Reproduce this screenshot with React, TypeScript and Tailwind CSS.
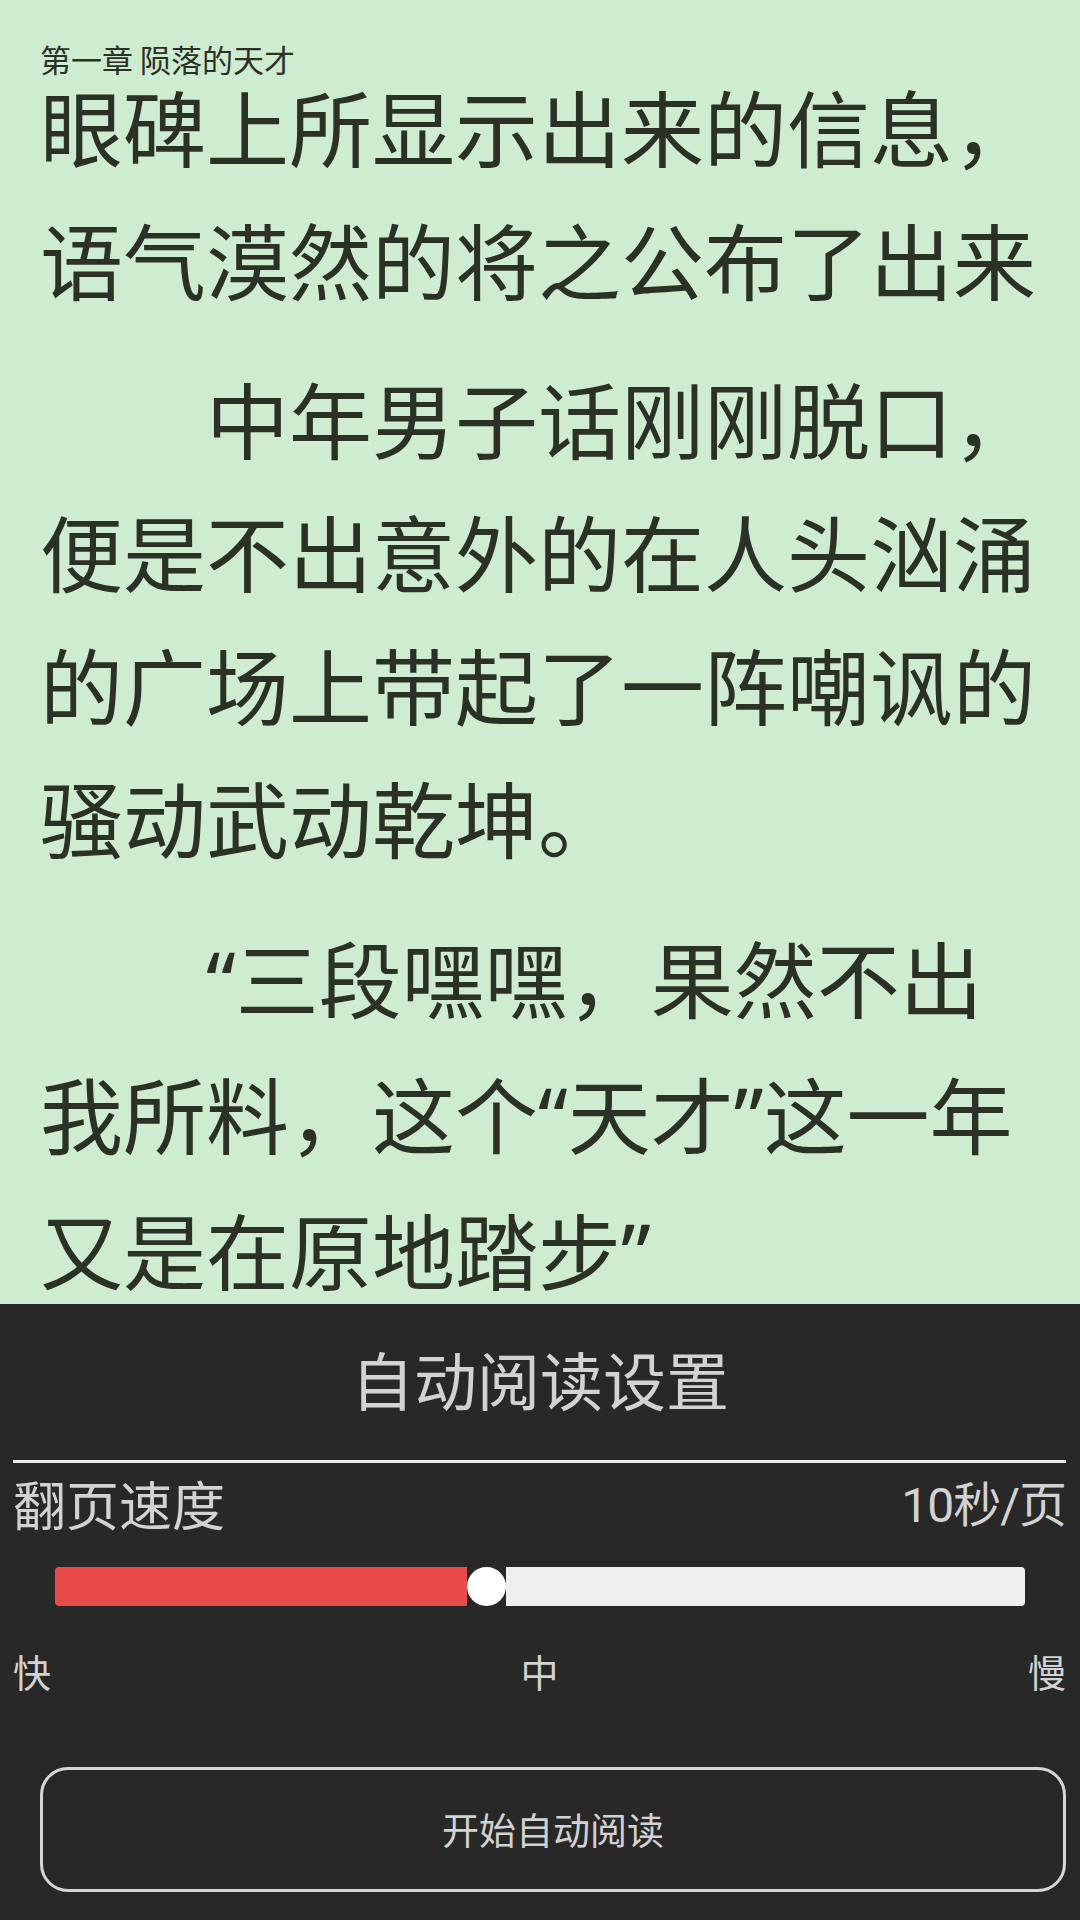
import React from "react";

const cjk = { fontFamily: '"Noto Sans CJK SC", "Noto Sans", sans-serif' };
const q = { fontFamily: '"Noto Sans", "Noto Sans CJK SC", sans-serif' };
const num = { fontFamily: 'Roboto, "Noto Sans CJK SC", sans-serif' };

function Line({ children, indent }: { children: React.ReactNode; indent?: boolean }) {
  return (
    <div className={`whitespace-nowrap leading-[133px] ${indent ? "pl-[166px]" : ""}`}>{children}</div>
  );
}

export default function App() {
  return (
    <div className="w-[1080px] h-[1920px] flex flex-col overflow-hidden" style={cjk}>
      <div className="h-[1304px] shrink-0 bg-[#cdecd0] text-[#2c3126] pl-[40px] pt-[44px]">
        <div className="text-[31px] leading-[30px] whitespace-nowrap">第一章 陨落的天才</div>
        <div className="text-[83px]">
          <div className="mb-[26px]">
            <div className="whitespace-nowrap leading-[103px] mb-[15px]">眼碑上所显示出来的信息，</div>
            <Line>语气漠然的将之公布了出来</Line>
          </div>
          <div className="mb-[27px]">
            <Line indent>中年男子话刚刚脱口，</Line>
            <Line>便是不出意外的在人头汹涌</Line>
            <Line>的广场上带起了一阵嘲讽的</Line>
            <Line>骚动武动乾坤。</Line>
          </div>
          <div>
            <Line indent>
              <span style={q}>“</span>三段嘿嘿，果然不出
            </Line>
            <Line>
              我所料，这个<span style={q}>“</span>天才<span style={q}>”</span>这一年
            </Line>
            <div className="whitespace-nowrap leading-[100px] mt-[16px]">
              又是在原地踏步<span style={q}>”</span>
            </div>
          </div>
        </div>
      </div>

      <div className="flex-1 bg-[#282828] text-[#d2d2d2] flex flex-col pt-[43px]">
        <div className="h-[62px] text-[63px] leading-[62px] text-center">自动阅读设置</div>
        <div className="mt-[51px] ml-[13px] mr-[14px] h-[3px] bg-[#ececec]" />
        <div className="mt-[14px] h-[52px] flex items-center justify-between pl-[13px] pr-[14px] text-[53px] leading-[52px]">
          <span>翻页速度</span>
          <span className="text-[48px] leading-[52px] tracking-[-1px]" style={num}>
            10<span style={cjk}>秒</span>/<span style={cjk}>页</span>
          </span>
        </div>
        <div className="mt-[38px] mx-[55px] h-[39px] flex items-stretch">
          <div className="w-[412px] bg-[#e94b4a] rounded-l-[4px]" />
          <div className="w-[39px] h-[39px] rounded-full bg-white" />
          <div className="flex-1 bg-[#efefef] rounded-r-[4px]" />
        </div>
        <div className="mt-[46px] h-[38px] flex items-center justify-between pl-[13px] pr-[14px] text-[38px] leading-[38px]">
          <span>快</span>
          <span>中</span>
          <span>慢</span>
        </div>
        <div className="mt-[77px] ml-[40px] mr-[14px] h-[125px] rounded-[28px] border-[3px] border-[#d6d6d6] flex items-center justify-center text-[37px]">
          开始自动阅读
        </div>
      </div>
    </div>
  );
}
